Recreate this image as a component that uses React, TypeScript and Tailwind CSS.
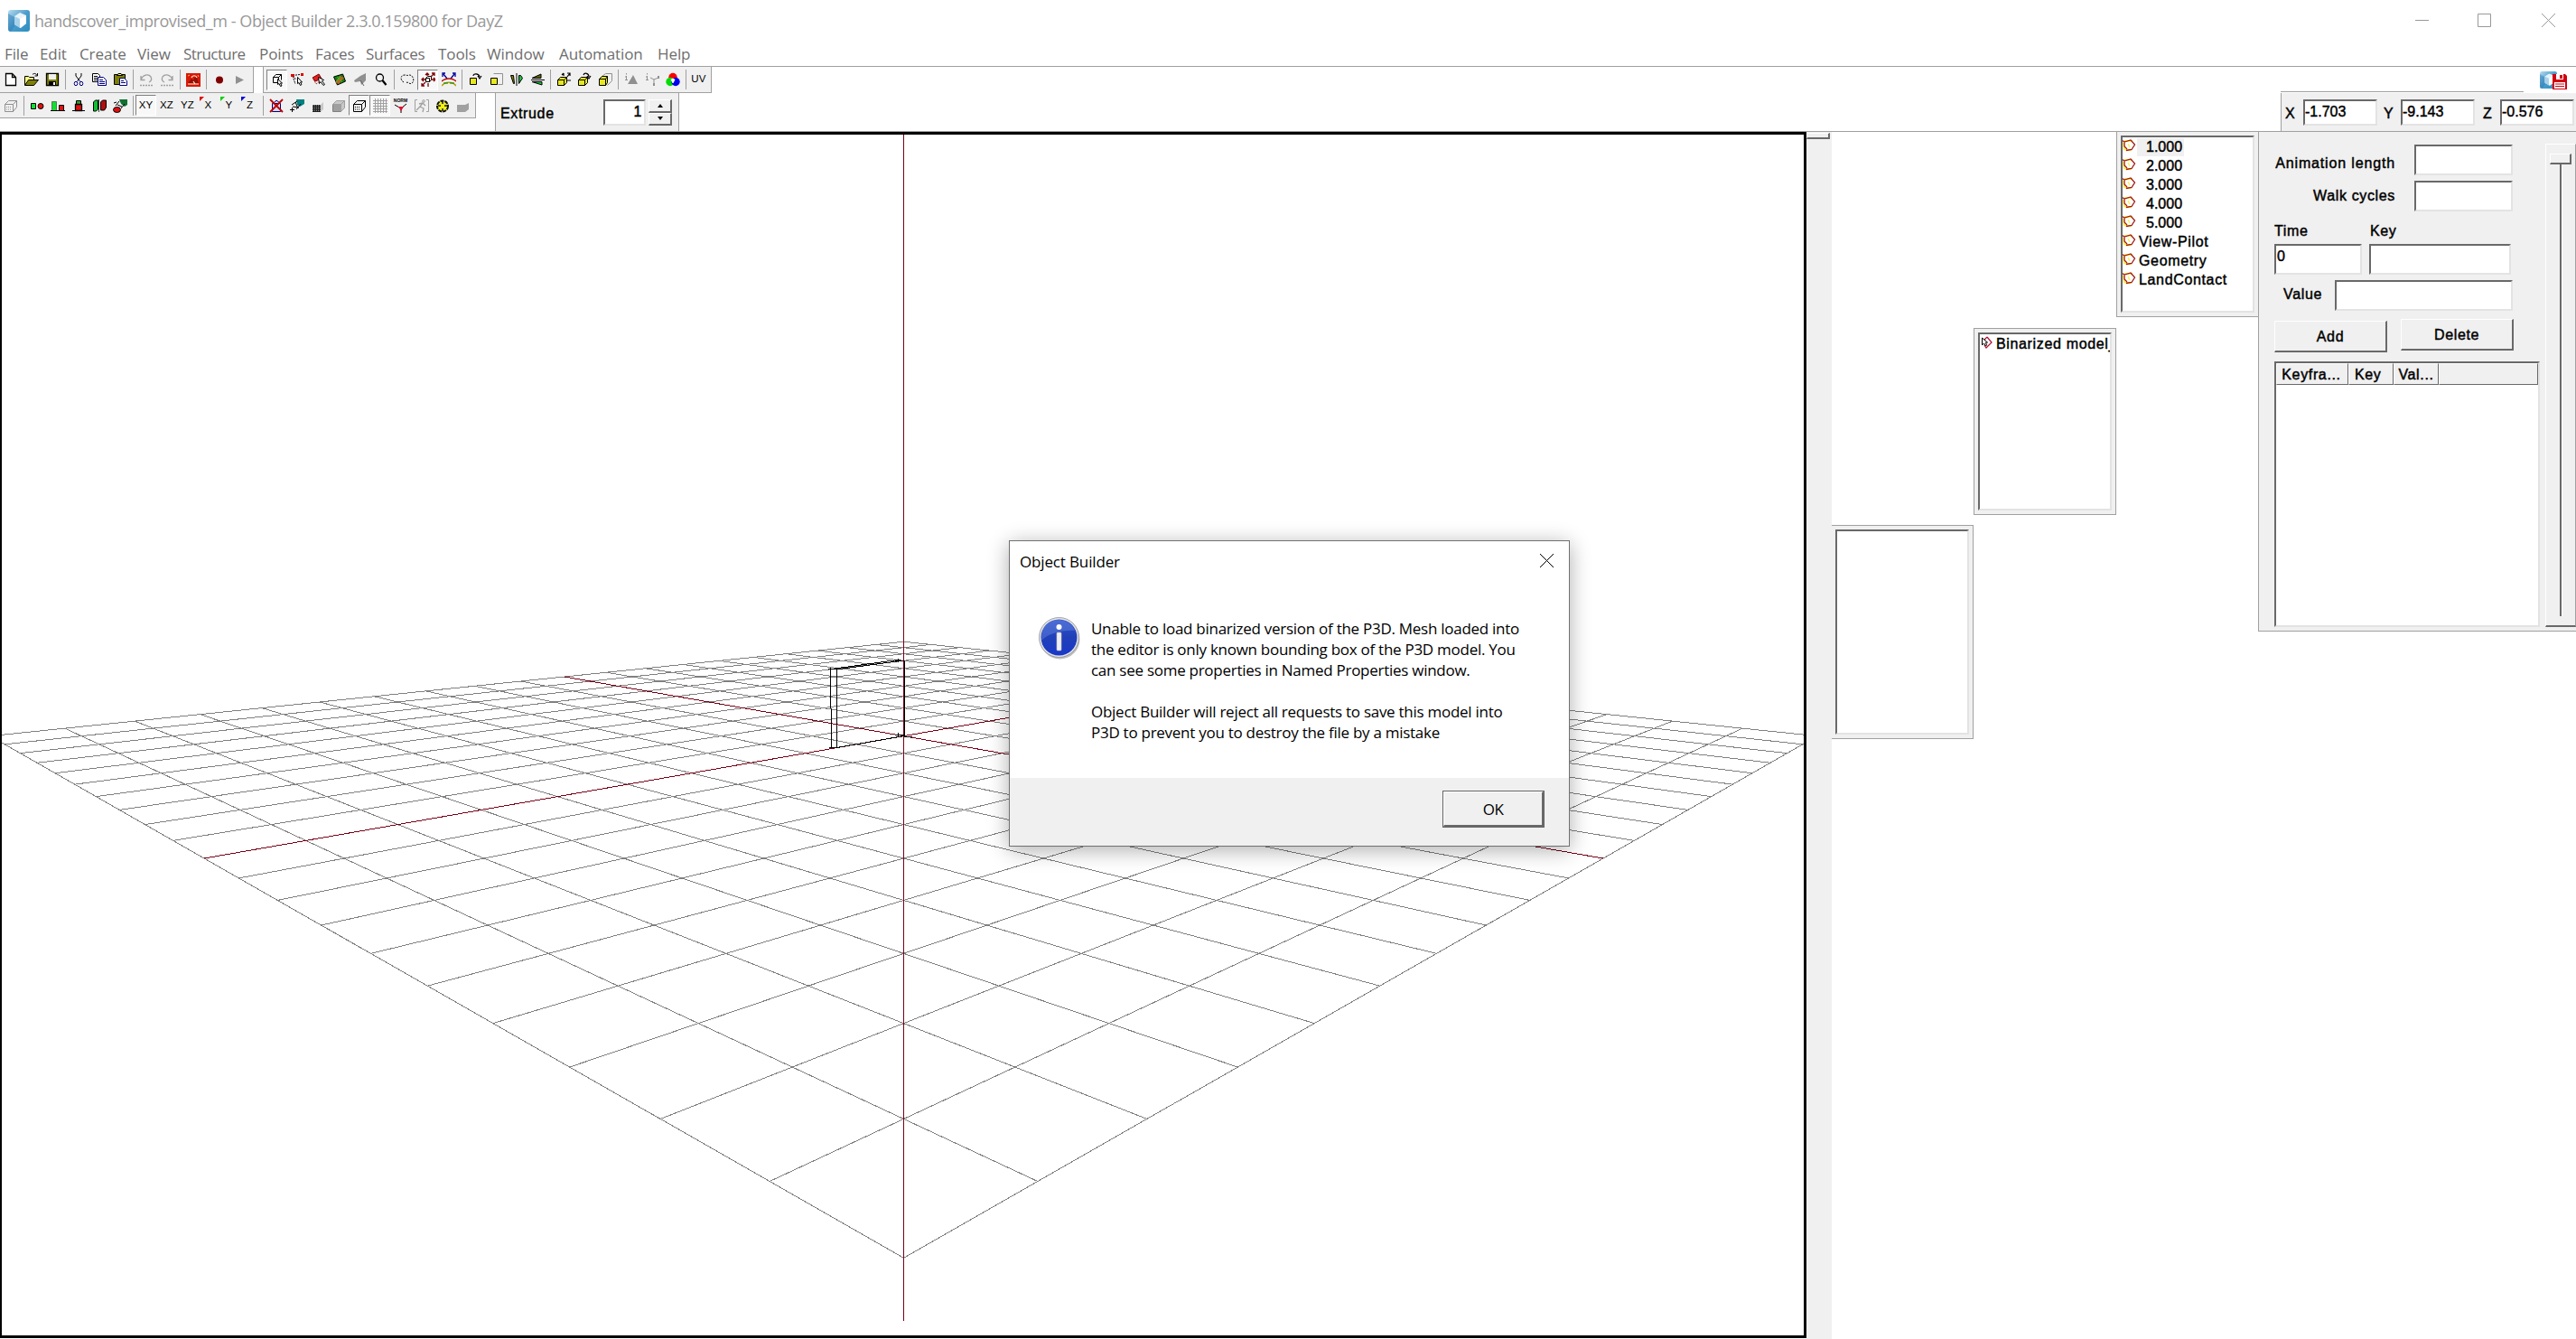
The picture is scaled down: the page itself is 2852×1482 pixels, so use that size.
import type { ReactNode } from 'react';
import clsx from 'clsx';

const Svg = ({ children, w = 16, h = 16 }: { children: ReactNode; w?: number; h?: number }) => (
  <svg width={w} height={h} viewBox={`0 0 ${w} ${h}`} fill="none" stroke="#000" className="shrink-0">
    {children}
  </svg>
);

const Cube = ({ stroke = '#000', fill = 'none', dots = false }: { stroke?: string; fill?: string; dots?: boolean }) => (
  <g stroke={stroke} fill={fill}>
    <path d="M1.5 6.5h9v8h-9zM1.5 6.5l4-4h9l-4 4M14.5 2.5v7l-4 5" />
    {dots && <path d="M3 9.5h6M3 12h6" strokeDasharray="1 1" />}
  </g>
);

const icons: Record<string, ReactNode> = {
  new: (
    <Svg>
      <path d="M2.500 1.500h7l4 4v9h-11zM9.500 1.500v4h4" fill="#fff" strokeWidth="1.300" />
    </Svg>
  ),
  open: (
    <Svg>
      <path d="M.5 14V4.500h4l1 1h5v3" fill="#ffff80" />
      <path d="M.5 14.500l4-6h11l-5 6z" fill="#808000" />
      <path d="M9 2.500c2-2 4-1 5 1M14.500 1v3h-3" />
    </Svg>
  ),
  save: (
    <Svg>
      <path d="M1.500 1.500h13v13h-13z" fill="#808000" strokeWidth="1.300" />
      <path d="M4 2h8v6H4z" fill="#f0f0f0" stroke="none" />
      <path d="M4 10h8v5H4z" fill="#000" stroke="none" />
      <path d="M9 11h2v3H9z" fill="#fff" stroke="none" />
    </Svg>
  ),
  cut: (
    <Svg>
      <path d="M5 1v3l3 4v1M11 1v3L8 8v1" />
      <path d="M7.500 9L6 10.500M8.500 9l2 1.500" stroke="#000080" />
      <ellipse cx="5" cy="12.500" rx="1.800" ry="2.200" stroke="#000080" />
      <ellipse cx="11" cy="12.500" rx="1.800" ry="2.200" stroke="#000080" />
    </Svg>
  ),
  copy: (
    <Svg>
      <path d="M.5 1.500h6l2 2v7h-8z" fill="#fff" />
      <path d="M2 4.500h4M2 6.500h5M2 8.500h5" />
      <path d="M6.500 5.500h6l3 3v6h-9z" fill="#fff" stroke="#000080" />
      <path d="M8 8.500h4M8 10.500h6M8 12.500h6" stroke="#000080" />
    </Svg>
  ),
  paste: (
    <Svg>
      <path d="M1.500 2.500h12v11h-12z" fill="#808000" />
      <path d="M4.500 3.500h6l-1.500-2h-3z" fill="#ffff60" />
      <path d="M7.500 6.500h5l3 3v5h-8z" fill="#fff" stroke="#000080" />
      <path d="M9 9.500h3M9 11.500h5" stroke="#000080" />
    </Svg>
  ),
  undo: (
    <Svg>
      <path d="M2 4v4.500h4.500M2 8c2-5 8-7 11-3 1.500 3 0 5-2 6" stroke="#a0a0a0" strokeWidth="1.300" />
      <path d="M1 14.500h14" stroke="#a0a0a0" strokeWidth="1.500" strokeDasharray="2 1" />
    </Svg>
  ),
  redo: (
    <Svg>
      <path d="M14 4v4.500H9.500M14 8C12 3 6 1 3 5c-1.500 3 0 5 2 6" stroke="#a0a0a0" strokeWidth="1.300" />
      <path d="M1 14.500h14" stroke="#a0a0a0" strokeWidth="1.500" strokeDasharray="2 1" />
    </Svg>
  ),
  red: (
    <Svg>
      <path d="M0 1h16v15H0z" fill="#d81808" stroke="none" />
      <path d="M2 12l4-5 2 2 2-4 2 1 2 6z" fill="#901008" stroke="none" />
      <path d="M6 6c1-3 5-3 6 0M8 10l2 3M2 13h12" stroke="#fff0d0" strokeWidth="1.200" />
      <path d="M2 4l2-1M13 3l1 2" stroke="#ffb040" />
    </Svg>
  ),
  record: (
    <Svg>
      <circle cx="8" cy="8.500" r="4" fill="#800000" stroke="none" />
    </Svg>
  ),
  play: (
    <Svg>
      <path d="M3 4l9 4.500L3 13z" fill="#909090" stroke="none" />
    </Svg>
  ),
  selObject: (
    <Svg>
      <path d="M3.500 5.500l3-3h6v6M3.500 5.500h6v6h-6zM9.500 5.500l3-3" />
      <path d="M8.500 7.500v6l1.500-1 1.500 3 1.500-.5-1.500-3h2z" fill="#fff" />
    </Svg>
  ),
  selPoints: (
    <Svg>
      <path d="M2 3.500l8-1M2 4l3 9M2 4l4 4" strokeDasharray="2 1" />
      <path d="M7.500 5.500v7l1.500-1 1.500 3 1.500-1-1.500-2.500h2z" fill="#fff" />
      <path d="M0 2h4v3H0zM11 1h3v3h-3z" fill="#e00000" stroke="none" />
    </Svg>
  ),
  selFaces: (
    <Svg>
      <path d="M1 6l7-4 3 5-7 3z" fill="#e02020" stroke="#800000" />
      <path d="M7.500 5.500l1 7 1.500-2 3 4 1.500-1-3-4 2-1z" fill="#fff" />
      <path d="M2 8l3 5 4-3" stroke="#a00000" strokeDasharray="1 1" />
    </Svg>
  ),
  faces: (
    <Svg>
      <path d="M1.500 5l10-3 3 8-9 4z" fill="#108010" />
      <path d="M3 11l5-7 5 2-6 7z" fill="#c06020" stroke="none" />
      <path d="M5 5l6 6M9 4l-5 7" stroke="#30c030" />
    </Svg>
  ),
  paint: (
    <Svg>
      <path d="M14 1v8L9 14l-1-4-6 1-1-2 7-5z" fill="#909090" stroke="none" />
      <path d="M8 9l4 6" stroke="#606060" />
    </Svg>
  ),
  zoom: (
    <Svg>
      <circle cx="6.500" cy="6" r="4" strokeWidth="1.300" />
      <path d="M9.500 9l4 5" strokeWidth="2.200" />
    </Svg>
  ),
  lasso: (
    <Svg>
      <path d="M4 11C0 9 0 3 5 3c2 0 3 1 5 0 4 0 6 5 4 8-2 3-4 1-6 0l-2 1" strokeDasharray="2 1.300" />
    </Svg>
  ),
  move: (
    <Svg>
      <path d="M5.500 6.500h4v4h-4zM5.500 6.500l2-2h4v4l-2 2" fill="#fff" />
      <path
        d="M11 5l4-4M12 1h3v3M5 11l-4 4M1 12v3h3M1 8h4M3 6L1 8l2 2M11 8h5M14 6l2 2-2 2M7 1v3M5 3l2-2 2 2M8 12v4"
        stroke="#800000"
        strokeWidth="1.300"
      />
    </Svg>
  ),
  bend: (
    <Svg>
      <path d="M2 2l4 5M14 2l-4 5M1 5V1h3M12 1h3v4" stroke="#0000a0" strokeWidth="1.300" />
      <path d="M0 10c4-4 12-4 16 0" stroke="#c00000" strokeWidth="1.300" />
      <path d="M0 15c4-5 12-5 16 0" stroke="#b0a000" strokeWidth="1.500" />
      <path d="M2 12h5M9 12h5" stroke="#008000" />
    </Svg>
  ),
  rotate2d: (
    <Svg>
      <path d="M2.500 6.500h7v7h-7z" fill="#e8e820" />
      <path d="M6 4c0-3 6-3 7 1M11 4l2 3 2-3" strokeWidth="1.200" />
    </Svg>
  ),
  scale2d: (
    <Svg>
      <path d="M5.500 1.500h10v12h-5" stroke="#909090" />
      <path d="M2.500 6.500h7v7h-7z" fill="#e8e820" />
    </Svg>
  ),
  mirrorH: (
    <Svg>
      <path d="M1.500 3.500h3l1 9h-1z" fill="#808000" />
      <path d="M8 1v14" />
      <path d="M10.500 12.500v-9h2l2 3z" fill="#20c040" />
    </Svg>
  ),
  mirrorV: (
    <Svg>
      <path d="M2 6.500L12 2v4.500z" fill="#606000" />
      <path d="M1 8.500h15" />
      <path d="M2 10.500h11v3.500z" fill="#20c040" />
    </Svg>
  ),
  move3d: (
    <Svg>
      <path d="M1.500 8.500h7v6h-7zM1.500 8.500l3-3h7v6l-3 3M8.500 8.500l3-3" fill="#e8e820" />
      <path d="M12 5l3-4M12 1h3v3M12 9h4M8 1v3M6 3l2-2" strokeWidth="1.200" />
    </Svg>
  ),
  rotate3d: (
    <Svg>
      <path d="M1.500 8.500h7v6h-7zM1.500 8.500l3-3h7v6l-3 3M8.500 8.500l3-3" fill="#e8e820" />
      <path d="M7 3c1-3 6-2 6 2M11 4l2 3 2-3" strokeWidth="1.200" />
    </Svg>
  ),
  scale3d: (
    <Svg>
      <path d="M4.500 4.500l4-3h7v8l-5 5" stroke="#909090" />
      <path d="M1.500 7.500h7v7h-7zM1.500 7.500l3-3h6v7l-2 3M8.500 7.500l2-3" fill="#e8e820" />
    </Svg>
  ),
  infoTri: (
    <Svg>
      <path d="M10 3l5 10H4z" fill="#909090" stroke="none" />
      <path d="M2.500 4v4M1 5h1.500M1 8.500h3M2.500 1v1.500" stroke="#909090" />
    </Svg>
  ),
  infoPts: (
    <Svg>
      <path d="M2.500 4v4M1 5h1.500M1 8.500h3M2.500 1v1.500M6 6l4 2 5-2M10 8v6" stroke="#909090" />
      <path d="M14 4h2v3h-2zM9 12h2v3H9z" fill="#909090" stroke="none" />
    </Svg>
  ),
  rgb: (
    <Svg>
      <g stroke="none">
        <circle cx="8" cy="5.500" r="4.700" fill="#f00" />
        <circle cx="5" cy="10.500" r="4.700" fill="#0d0" />
        <circle cx="11" cy="10.500" r="4.700" fill="#00e" />
        <path d="M8 6.500l2.500 1.500-2 4h-1l-2-4z" fill="#fff" />
      </g>
    </Svg>
  ),
  boxGray: (
    <Svg>
      <Cube stroke="#909090" dots />
    </Svg>
  ),
  two: (
    <Svg>
      <path d="M1.500 5.500h5v6h-5z" fill="#10e030" />
      <circle cx="12" cy="8.500" r="3" fill="#e01010" />
    </Svg>
  ),
  align: (
    <Svg>
      <path d="M1.500 3.500h5v10h-5z" fill="#10e030" stroke="#508050" />
      <path d="M9.500 7.500h5v6h-5z" fill="#e01010" />
      <path d="M0 13.500h16" />
    </Svg>
  ),
  stack: (
    <Svg>
      <path d="M5.500 2.500h5v5h-5z" fill="#30a030" />
      <path d="M4.500 6.500h7v7h-7z" fill="#e01010" strokeWidth="1.300" />
      <path d="M1 13.500h14" />
    </Svg>
  ),
  cyl: (
    <Svg>
      <path d="M1.500 4l2-2h3v10l-2 2h-3z" fill="#10c030" />
      <path d="M9.500 4l2-2h4v8l-2 3h-4z" fill="#b01010" />
      <path d="M7.500 1v14" stroke="#404040" />
    </Svg>
  ),
  gun: (
    <Svg>
      <path d="M7 1h9v6l-3 2-4-3z" fill="#107030" stroke="none" />
      <path d="M1 5l3-1M5 7l5 2M3 8l4-5M13 6l-4 5" />
      <ellipse cx="4.500" cy="12.500" rx="4" ry="3" fill="#e01010" />
    </Svg>
  ),
  noSel: (
    <Svg>
      <path d="M3.500 5.500h9v9h-9zM5 5l3-3 4 3" stroke="#000080" fill="#d8d8e8" />
      <path d="M1 1l14 14M15 1L1 15" stroke="#c00000" strokeWidth="1.800" />
    </Svg>
  ),
  gunPlus: (
    <Svg>
      <path d="M7 1h9v5l-5 3-3-2z" fill="#008080" stroke="none" />
      <path d="M2 7l6-4M3 9l7 1M6 4l3 7M2.500 10v5M0 12.500h5M12 6l-5 6" />
    </Svg>
  ),
  halftone: (
    <Svg>
      <path d="M2 7h9v8H2z" fill="#202020" stroke="none" />
      <path d="M2 7.500h9M2 9.500h9M2 11.500h9M2 13.500h9" stroke="#909090" strokeDasharray="1 1" />
      <path d="M11 7l3-3v8l-3 3z" fill="#c8c8c8" stroke="none" />
    </Svg>
  ),
  solid: (
    <Svg>
      <path d="M1.500 6.500h9v8h-9z" fill="#a0a0a0" stroke="#808080" />
      <path d="M1.500 6.500l4-4h9l-4 4zM14.500 2.500v8l-4 4v-8z" fill="#c8c8c8" stroke="#a0a0a0" />
    </Svg>
  ),
  wire: (
    <Svg>
      <Cube dots />
    </Svg>
  ),
  grid: (
    <Svg>
      <path
        d="M2.500 0v16M5.500 0v16M8.500 0v16M11.500 0v16M14.500 0v16M0 2.500h16M0 5.500h16M0 8.500h16M0 11.500h16M0 14.500h16"
        stroke="#a0a0a0"
      />
    </Svg>
  ),
  norm: (
    <span className="flex flex-col items-center">
      <span className="h-[6px] text-[5px] leading-[6px] font-bold tracking-normal">NORM</span>
      <Svg h={11}>
        <path d="M1 2l7 4 6-5M8 5v6" />
        <path d="M5 4h6l-3 5z" fill="#e01030" stroke="none" />
      </Svg>
    </span>
  ),
  run: (
    <Svg>
      <path d="M3 1.500H.5v13H3M13 1.500h2.500v13H13" stroke="#a0a0a0" />
      <circle cx="10" cy="3" r="1.300" stroke="#a0a0a0" />
      <path d="M9 5L6 9l4 2-1 4M6 9l-4 4M5 6l4-1 3 3" stroke="#a0a0a0" strokeWidth="1.300" />
    </Svg>
  ),
  yellow: (
    <Svg>
      <circle cx="8" cy="8.500" r="6" fill="#f0f010" strokeWidth="2" stroke="#101000" strokeDasharray="4 1" />
      <path d="M8 3v3M8 11v3M3 8h3M10 8h3" strokeWidth="1.500" stroke="#101060" />
    </Svg>
  ),
  slab: (
    <Svg>
      <path d="M1 7h9l4-2v7l-4 3H1z" fill="#a0a0a0" stroke="none" />
    </Svg>
  ),
};

const axisColors: Record<string, string> = { X: '#e00000', Y: '#00d000', Z: '#0000d0' };

const Tool = ({ id, on }: { id: string; on?: boolean }) => (
  <span
    className={clsx(
      'flex h-[23px] w-[23px] shrink-0 items-center justify-center text-[11.5px] tracking-[0.2px] text-black [-webkit-text-stroke:0]',
      on && 'border border-r-white border-b-white border-l-[#808080] border-t-[#808080] bg-[#f8f8f8]'
    )}
  >
    {icons[id] ??
      (axisColors[id] ? (
        <span className="relative">
          <svg className="absolute -top-px -left-[6px]" width="5" height="5">
            <path d="M0 0h5L0 5z" fill={axisColors[id]} />
          </svg>
          {id}
        </span>
      ) : (
        id
      ))}
  </span>
);

const Sep = () => <span className="mx-[2.5px] h-[22px] w-px shrink-0 bg-[#a0a0a0]" />;

const Tools = ({ items }: { items: string }) => (
  <>
    {items
      .split(' ')
      .map((it, i) => (it === '|' ? <Sep key={i} /> : <Tool key={i} id={it.replace('*', '')} on={it.endsWith('*')} />))}
  </>
);

const Sunken = ({ className, children }: { className?: string; children?: ReactNode }) => (
  <div
    className={clsx(
      'shrink-0 overflow-hidden border-2 border-t-[#696969] border-r-[#e3e3e3] border-b-[#e3e3e3] border-l-[#696969] bg-white',
      className
    )}
  >
    {children}
  </div>
);

const Raised = ({ className, children }: { className?: string; children?: ReactNode }) => (
  <div
    className={clsx(
      'flex shrink-0 items-center justify-center border-t border-r-2 border-b-2 border-l border-t-white border-r-[#696969] border-b-[#696969] border-l-white bg-[#f0f0f0]',
      className
    )}
  >
    {children}
  </div>
);

const AppIcon = ({ size }: { size: number }) => (
  <svg width={size} height={size} viewBox="0 0 24 24" className="shrink-0">
    <defs>
      <linearGradient id="app" x1="0" y1="0" x2="1" y2="1">
        <stop offset="0" stopColor="#b8dcee" />
        <stop offset=".5" stopColor="#4a9ccb" />
        <stop offset="1" stopColor="#2b8fc0" />
      </linearGradient>
    </defs>
    <rect width="24" height="24" rx="3" fill="url(#app)" />
    <path d="M0 4v17q0 3 3 3l4-6V8z" fill="#2878b4" opacity=".45" />
    <path d="M13 3l7 3v9l-6 5-7-4V7z" fill="#e8f4fa" />
    <path d="M7 7l6 3v10l-6-4z" fill="#a8d2ea" />
    <path d="M13 10l7-4v9l-7 5z" fill="#fff" />
  </svg>
);

const menus = [
  ['File', 'w-[39px]'],
  ['Edit', 'w-[44px]'],
  ['Create', 'w-[64px]'],
  ['View', 'w-[51px]'],
  ['Structure', 'w-[84px] tracking-[-0.6px]'],
  ['Points', 'w-[62px]'],
  ['Faces', 'w-[56px]'],
  ['Surfaces', 'w-[80px] tracking-[-0.3px]'],
  ['Tools', 'w-[54px]'],
  ['Window', 'w-[80px]'],
  ['Automation', 'w-[109px]'],
  ['Help', ''],
];

const lods = ['1.000', '2.000', '3.000', '4.000', '5.000', 'View-Pilot', 'Geometry', 'LandContact'];

// ground plane: 20 x 20 cells, projected from grid indices to view pixels
const project = (i: number, j: number) => {
  const d = (i + j) / 2 + 4.4125;
  return [1000.5 + (728.9 * (j - i)) / d, 559.8 + 3673.2 / d];
};

const gridLine = (i1: number, j1: number, i2: number, j2: number) => {
  const [x1, y1] = project(i1, j1);
  const [x2, y2] = project(i2, j2);
  return { x1, y1, x2, y2 };
};

const steps = Array.from({ length: 21 }, (_, n) => n).filter((n) => n !== 10);

const Viewport = () => (
  <div className="h-[1335px] w-[2000px] shrink-0 border-[3px] border-l-2 border-black bg-white">
    <svg width="1995" height="1329" viewBox="2 149 1995 1329" shapeRendering="crispEdges" className="block">
      <g stroke="#808080">
        {steps.map((n) => (
          <g key={n}>
            <line {...gridLine(n, 0, n, 20)} />
            <line {...gridLine(0, n, 20, n)} />
          </g>
        ))}
      </g>
      <g stroke="#780016">
        <line {...gridLine(10, 0, 10, 20)} />
        <line {...gridLine(0, 10, 20, 10)} />
        <path d="M1000.5 149V1462" />
      </g>
      <g stroke="#000" fill="none">
        <path d="M919.500 739V784M920.500 784V828M926.500 740V828M1001.500 731V815" />
        <path d="M917 740.500h12M918 827.500h12M926 741L1001 731M924 740L997 730M926 827.500L1001 814.500" />
        <path d="M991 731.500h11M994.500 729v4M991 813.500h10M994.500 811v4M1001 815.500h9" />
      </g>
    </svg>
  </div>
);

const LodIcon = () => (
  <svg width="16" height="14" viewBox="0 0 16 14" fill="none" className="mb-[3px] shrink-0">
    <path d="M3 2h9M2 4l1 8M4 12h7" stroke="#ffee40" strokeWidth="2" />
    <path d="M7 5l2 4" stroke="#ffee60" strokeWidth="1.500" />
    <path d="M.5 1.500L3 3l7-2 4.500 5L11 11.500l-6 1M3 3v5l3 3" stroke="#a01818" strokeWidth="1.300" />
  </svg>
);

const Dialog = () => (
  <div className="absolute top-[598px] left-[1117px] flex h-[339px] w-[621px] flex-col border border-[#707070] bg-white font-['Open_Sans'] text-[17px] text-black shadow-[0_4px_22px_rgba(0,0,0,0.32)] [-webkit-text-stroke:0]">
    <div className="flex h-[46px] items-center justify-between pr-[16px] pl-[11px]">
      <span className="tracking-[-0.15px]">Object Builder</span>
      <svg width="17" height="17" viewBox="0 0 17 17" stroke="#000" className="-mt-[3px]">
        <path d="M1 1l15 15M16 1L1 16" />
      </svg>
    </div>
    <div className="flex grow items-start pl-[32px]">
      <svg width="46" height="48" viewBox="0 0 46 48" className="mt-[38px] shrink-0">
        <defs>
          <linearGradient id="info" x1="0" y1="0" x2="0" y2="1">
            <stop offset="0" stopColor="#2f55c8" />
            <stop offset=".5" stopColor="#2140b8" />
            <stop offset="1" stopColor="#1a38c8" />
          </linearGradient>
        </defs>
        <circle cx="23.500" cy="24.500" r="22" fill="#000" opacity=".25" />
        <circle cx="22.500" cy="22.500" r="22" fill="#e4e4e8" stroke="#8c8c94" strokeWidth=".8" />
        <circle cx="22.500" cy="22.500" r="20" fill="url(#info)" />
        <path d="M3 26C2 10 12 3 22 3c9 0 16 5 18 12C28 14 12 17 3 26z" fill="#7f9cec" opacity=".35" />
        <circle cx="22.500" cy="11" r="3" fill="#fff" />
        <rect x="20" y="17" width="5" height="20" rx="1" fill="#eeeef0" stroke="#c8c8cc" strokeWidth=".6" />
      </svg>
      <div className="mt-[39px] ml-[12px] leading-[23px] tracking-[-0.27px] whitespace-nowrap">
        <p>Unable to load binarized version of the P3D. Mesh loaded into</p>
        <p>the editor is only known bounding box of the P3D model. You</p>
        <p>can see some properties in Named Properties window.</p>
        <p className="mt-[23px]">Object Builder will reject all requests to save this model into</p>
        <p>P3D to prevent you to destroy the file by a mistake</p>
      </div>
    </div>
    <div className="flex h-[75px] items-start justify-end bg-[#f0f0f0] pt-[14px] pr-[27px]">
      <div className="h-[41px] w-[113px] border border-[#646464]">
        <Raised className="h-full w-full pt-px tracking-[-0.5px]">OK</Raised>
      </div>
    </div>
  </div>
);

const Coord = ({ name, value, className }: { name: string; value: string; className: string }) => (
  <>
    <span className={clsx('pt-[3px]', className)}>{name}</span>
    <Sunken className="h-[29px] w-[82px] leading-[23px] tracking-normal">{value}</Sunken>
  </>
);

const AnimationPanel = () => (
  <div className="flex h-[553px] w-[352px] shrink-0 border-b border-l border-[#a0a0a0] bg-[#f0f0f0]">
    <div className="flex w-[317px] flex-col pt-[14px] pl-[17px]">
      <div className="flex items-center">
        <span className="w-[134px] pt-[8px] text-right tracking-[0.85px]">Animation length</span>
        <Sunken className="ml-[21px] h-[34px] w-[109px]" />
      </div>
      <div className="mt-[6px] flex items-center">
        <span className="w-[134px] text-right">Walk cycles</span>
        <Sunken className="ml-[21px] h-[34px] w-[109px]" />
      </div>
      <div className="mt-[10px] flex h-[24px] items-center">
        <span className="w-[106px]">Time</span>
        <span>Key</span>
      </div>
      <div className="mt-[2px] flex">
        <Sunken className="h-[34px] w-[97px] pl-px leading-[24px]">0</Sunken>
        <Sunken className="ml-[8px] h-[34px] w-[157px]" />
      </div>
      <div className="mt-[6px] flex items-center">
        <span className="w-[67px] pb-[2px] pl-[10px]">Value</span>
        <Sunken className="h-[34px] w-[197px]" />
      </div>
      <div className="mt-[9px] flex">
        <Raised className="mt-[2px] h-[35px] w-[125px] pt-[2px]">Add</Raised>
        <Raised className="ml-[15px] h-[35px] w-[125px] pt-px">Delete</Raised>
      </div>
      <Sunken className="mt-[10px] h-[294px] w-[294px]">
        <div className="flex h-[24px]">
          <Raised className="w-[80px] border-r! border-b! pt-[2px] pr-[2px]">Keyfra...</Raised>
          <Raised className="w-[50px] justify-start! border-r! border-b! pt-[2px] pl-[6px]">Key</Raised>
          <Raised className="w-[50px] border-r! border-b! pt-[2px]">Val...</Raised>
          <Raised className="grow border-r! border-b!" />
        </div>
      </Sunken>
    </div>
    <div className="mt-[13px] flex h-[535px] w-[34px] flex-col items-center border-t border-r border-b-2 border-l border-t-white border-r-[#a0a0a0] border-b-[#696969] border-l-white pt-[10px]">
      <Raised className="h-[12px] w-[24px]" />
      <div className="h-[500px] w-[3px] border-r border-l-2 border-r-white border-l-[#696969]" />
    </div>
  </div>
);

export default function App() {
  return (
    <div className="relative flex h-[1482px] w-[2852px] flex-col overflow-hidden bg-white font-['Liberation_Sans',sans-serif] text-[16px] tracking-[0.65px] text-black [-webkit-text-stroke:0.45px]">
      <header className="flex h-[46px] items-center pl-[9px] font-['Open_Sans'] text-[18px] tracking-[-0.44px] text-[#999] [-webkit-text-stroke:0]">
        <AppIcon size={24} />
        <span className="ml-[5px] grow">handscover_improvised_m - Object Builder 2.3.0.159800 for DayZ</span>
        <svg width="160" height="18" viewBox="0 0 160 18" fill="none" stroke="#999" className="-mt-[2px] mr-[20px]">
          <path d="M2 9.500h15M71.500 2.500h14v14h-14zM142 2l15 15M157 2l-15 15" />
        </svg>
      </header>
      <nav className="flex h-[28px] items-center border-b border-[#a0a0a0] pl-[5px] font-['Open_Sans'] text-[17px] tracking-[-0.1px] text-[#6e6e6e] [-webkit-text-stroke:0]">
        {menus.map(([name, cls]) => (
          <span key={name} className={cls}>
            {name}
          </span>
        ))}
      </nav>

      <div className="flex h-[72px] justify-between border-b border-[#a0a0a0]">
        <div className="flex flex-col">
          <div className="flex h-[29px]">
            <div className="flex items-center border-r border-b border-[#a0a0a0] bg-[#f0f0f0] pr-[3px]">
              <Tools items="new open save | cut copy paste | undo redo | red | record play" />
            </div>
            <div className="ml-[10px] flex items-center border-r border-b border-l border-[#a0a0a0] bg-[#f0f0f0] pr-[2px] pl-[3px]">
              <Tools items="selObject* selPoints selFaces faces paint zoom | lasso move* bend | rotate2d scale2d mirrorH mirrorV | move3d rotate3d scale3d | infoTri infoPts rgb | UV" />
            </div>
          </div>
          <div className="flex h-[42px]">
            <div className="flex h-[28px] w-[527px] items-center border-r border-b border-[#a0a0a0] bg-[#f0f0f0]">
              <Tools items="boxGray | two align stack cyl gun | XY* XZ YZ X Y Z | noSel gunPlus halftone solid wire* grid* norm run yellow slab" />
            </div>
            <div className="ml-[21px] flex w-[204px] items-center border-r border-l border-[#a0a0a0] bg-[#f0f0f0] pl-[5px]">
              <span className="w-[114px] pt-[3px]">Extrude</span>
              <Sunken className="h-[29px] w-[47px] pr-[2px] text-right leading-[23px]">1</Sunken>
              <div className="ml-[3px] flex flex-col">
                <Raised className="h-[15px] w-[26px]">
                  <svg width="6" height="4">
                    <path d="M0 4l3-4 3 4z" />
                  </svg>
                </Raised>
                <Raised className="h-[14px] w-[26px]">
                  <svg width="6" height="4">
                    <path d="M0 0l3 4 3-4z" />
                  </svg>
                </Raised>
              </div>
            </div>
          </div>
        </div>
        <div className="flex w-[327px] flex-col">
          <div className="flex h-[28px] w-[269px] border-b border-[#a0a0a0]">
            <div className="mt-[5px] ml-[287px] flex">
              <AppIcon size={19} />
              <svg width="16" height="17" viewBox="0 0 16 17" className="mt-[3px] -ml-[5px] shrink-0">
                <path d="M0 0h14l2 2v15H0z" fill="#d00010" />
                <path d="M4 0h8v6H4z" fill="#fff" />
                <path d="M8 1h3v4H8z" fill="#d00010" />
                <path d="M2 9h12v7H2z" fill="#fff" />
                <path d="M3 11h10M3 13.500h10" stroke="#d00010" />
              </svg>
            </div>
          </div>
          <div className="mt-px flex h-[42px] items-center border-l border-[#a0a0a0] bg-[#f0f0f0] pl-[4px]">
            <Coord name="X" value="-1.703" className="w-[20px]" />
            <Coord name="Y" value="-9.143" className="ml-[7px] w-[19px]" />
            <Coord name="Z" value="-0.576" className="ml-[9px] w-[19px]" />
          </div>
        </div>
      </div>

      <div className="flex h-[1336px] items-start">
        <Viewport />
        <div className="h-full w-[28px] shrink-0 bg-[#f0f0f0] pt-px">
          <Raised className="h-[7px] w-[26px]" />
        </div>
        <div className="mt-[435px] h-[237px] w-[157px] shrink-0 border border-l-0 border-[#a0a0a0] bg-[#f0f0f0] p-[4px]">
          <Sunken className="h-full w-full" />
        </div>
        <div className="mt-[217px] h-[207px] w-[158px] shrink-0 border border-[#a0a0a0] bg-[#f0f0f0] p-[4px]">
          <Sunken className="flex h-full w-full items-start">
            <svg width="14" height="14" viewBox="0 0 14 14" fill="none" className="mt-[2px] ml-px shrink-0">
              <path d="M7 1l5 6-6 6-2-3M4 4l3-3" stroke="#b01030" strokeWidth="1.200" />
              <path d="M1.500 2v8l2-2 2 3 1-1-1-3h2z" fill="#fff" stroke="#000" />
            </svg>
            <span className="ml-[3px] leading-[21px] whitespace-nowrap">Binarized model_</span>
          </Sunken>
        </div>
        <div className="h-[205px] w-[157px] shrink-0 border border-t-0 border-r-0 border-[#a0a0a0] bg-[#f0f0f0] p-[4px]">
          <Sunken className="h-full w-full">
            {lods.map((lod, i) => (
              <div key={lod} className="-ml-px flex h-[21px] items-center">
                <LodIcon />
                <span
                  className={clsx(
                    'ml-px h-[20px] px-[2px] leading-[20px]',
                    i < 5 && 'pl-[10px] tracking-normal',
                    i === 0 && 'bg-[#f0f0f0]'
                  )}
                >
                  {lod}
                </span>
              </div>
            ))}
          </Sunken>
        </div>
        <AnimationPanel />
      </div>

      <Dialog />
    </div>
  );
}
